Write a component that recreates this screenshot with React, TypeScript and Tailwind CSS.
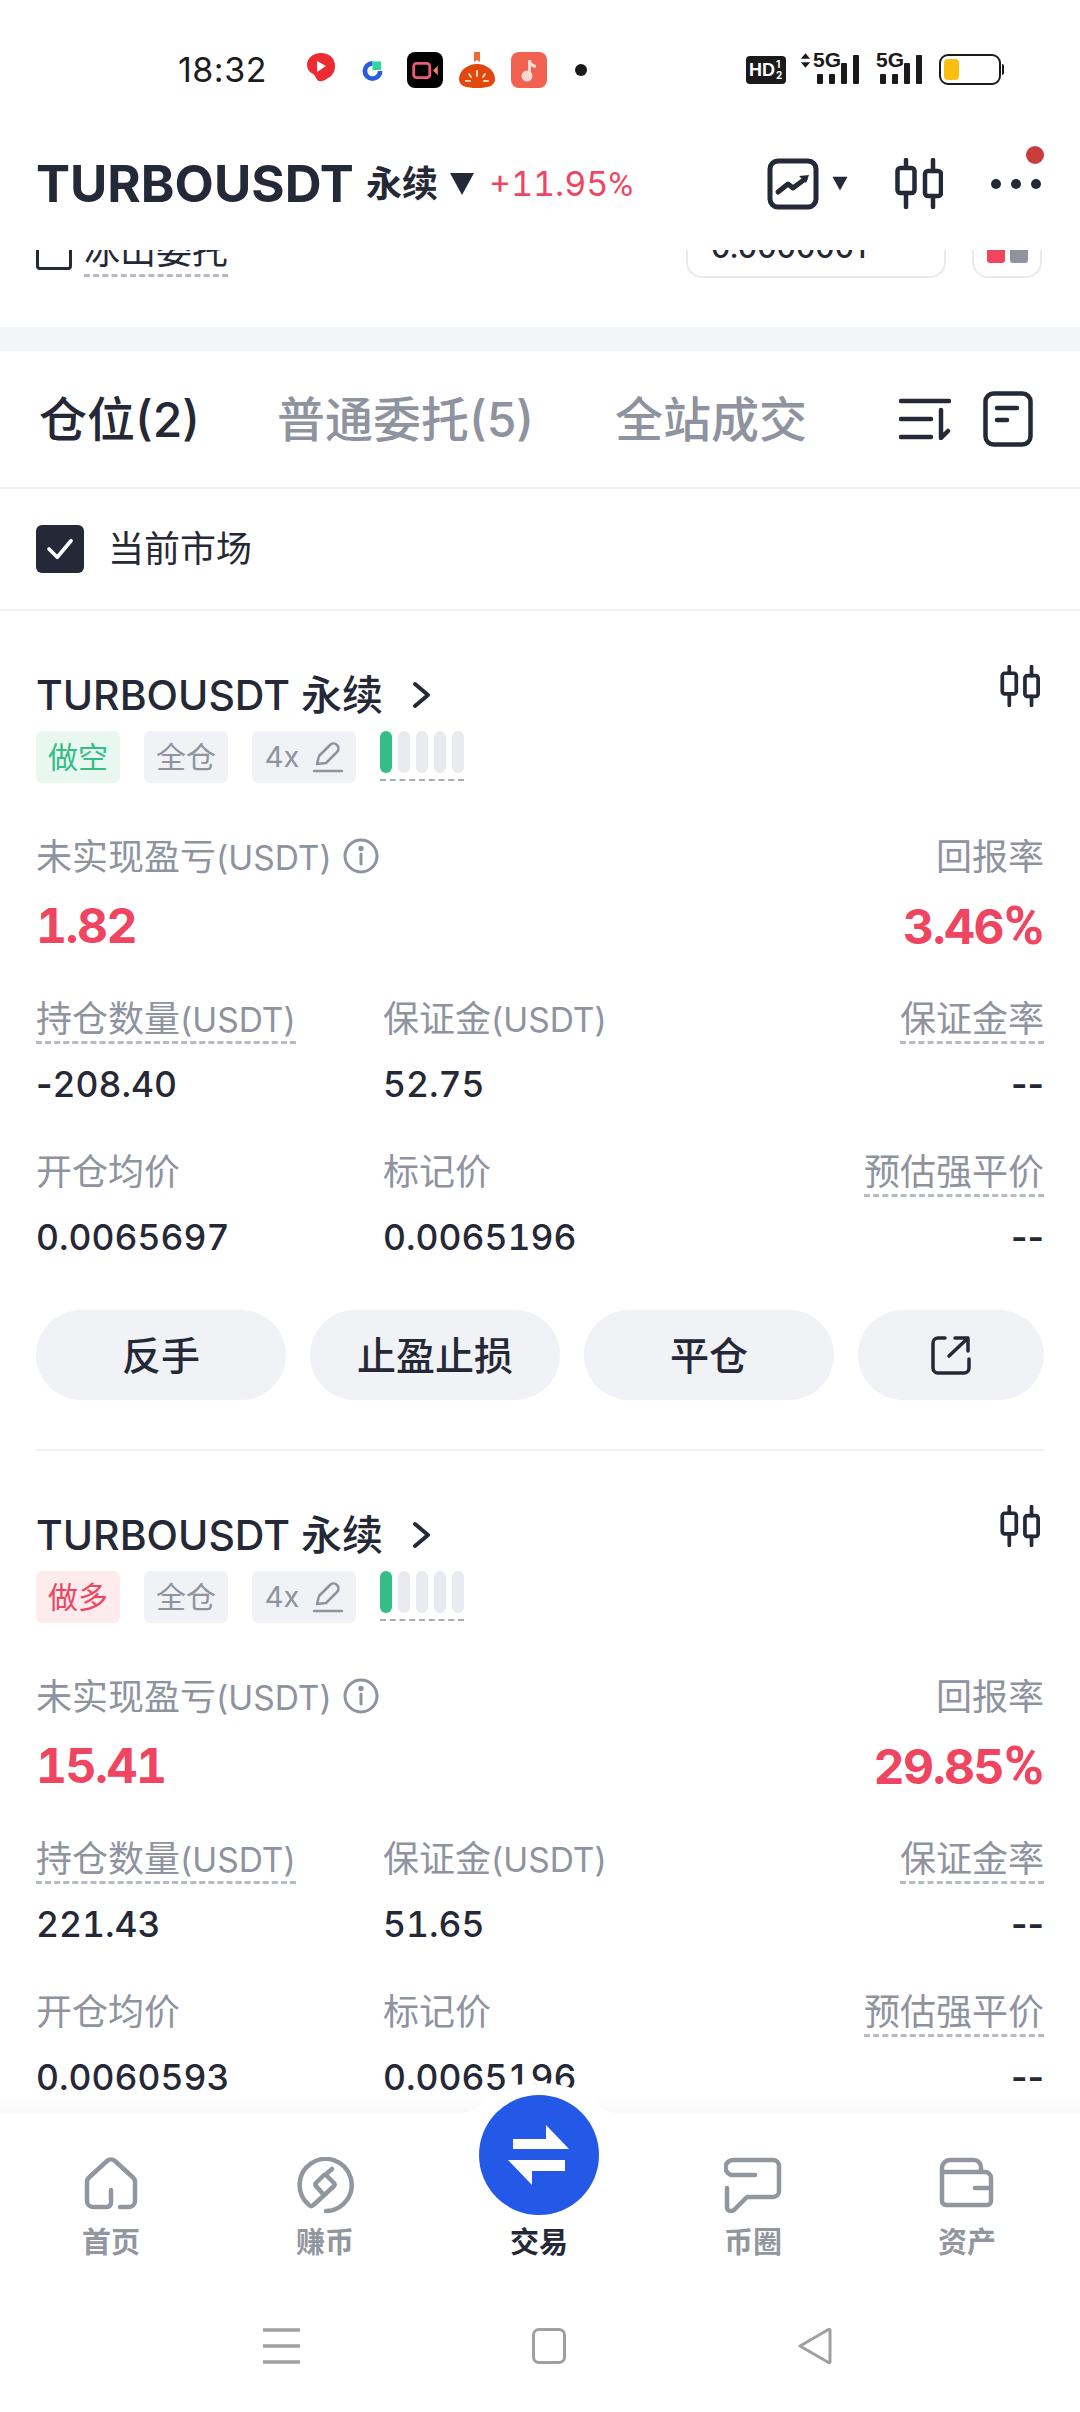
import React from 'react';

type Position = {
  side: string;
  sideClass: string;
  pnl: string;
  roe: string;
  size: string;
  margin: string;
  entry: string;
  mark: string;
};

const POSITIONS: Position[] = [
  { side: '做空', sideClass: 'bg-[#e8f8f1] text-[#35bd85]', pnl: '1.82', roe: '3.46', size: '-208.40', margin: '52.75', entry: '0.0065697', mark: '0.0065196' },
  { side: '做多', sideClass: 'bg-[#fdebee] text-[#ef4560]', pnl: '15.41', roe: '29.85', size: '221.43', margin: '51.65', entry: '0.0060593', mark: '0.0065196' },
];

// --- ICONS ---

function CandleIcon({ className }: { className: string }) {
  return (
    <svg viewBox="0 0 48 51" fill="none" stroke="#252836" strokeWidth="4.5" strokeLinecap="round" className={className}>
      <rect x="2.5" y="10" width="17" height="25" rx="3" />
      <rect x="30" y="13" width="16" height="25" rx="3" />
      <path d="M11 2v8M11 35v14M38 2v11M38 38v11" />
    </svg>
  );
}

function Triangle({ className }: { className: string }) {
  return (
    <svg viewBox="0 0 26 24" fill="#252836" className={className}>
      <path d="M1 1h24L13 23z" />
    </svg>
  );
}

function Percent({ className }: { className?: string }) {
  return <span className={`[font-family:Roboto,sans-serif] ${className ?? ''}`}>%</span>;
}

function Signal({ arrows }: { arrows?: boolean }) {
  return (
    <div className="relative h-[30px] w-[42px]">
      <span className="absolute left-[-4px] top-[-4px] text-[21px] leading-[20px] font-bold text-[#1a1a1a] [font-family:'Liberation_Sans_Narrow','Liberation_Sans',sans-serif]">5G</span>
      <div className="absolute bottom-0 left-0 flex items-end gap-[6px]">
        <span className="h-[10px] w-[6px] rounded-[1px] bg-[#1a1a1a]" />
        <span className="h-[10px] w-[6px] rounded-[1px] bg-[#1a1a1a]" />
        <span className="h-[21px] w-[6px] rounded-[1px] bg-[#1a1a1a]" />
        <span className="h-[29px] w-[6px] rounded-[1px] bg-[#1a1a1a]" />
      </div>
      {arrows && (
        <svg viewBox="0 0 12 16" fill="#1a1a1a" className="absolute left-[-17px] top-[-1px] h-[15px] w-[11px]">
          <path d="M6 0l5 6H1zM6 16l5-6H1z" />
        </svg>
      )}
    </div>
  );
}

function StatusBar() {
  return (
    <div className="flex h-[110px] shrink-0 items-start pt-[52px]">
      <div className="ml-[178px] h-[36px] w-[90px] text-[34px] leading-[36px] tracking-[0.5px] text-[#1c1c1c]">18:32</div>

      <svg viewBox="0 0 28 30" className="ml-[39px] h-[30px] w-[28px]">
        <path d="M14 1c8 0 14 5 14 13 0 6-3 10-7 12-3 2-6 4-9 3-3-1-3-5-6-7C2 20 0 17 0 13 0 6 6 1 14 1z" fill="#ee2a35" />
        <path d="M10 9l9 5-9 6z" fill="#fff" />
      </svg>
      <svg viewBox="0 0 22 22" fill="none" className="ml-[27px] mt-[8px] h-[22px] w-[21px]">
        <path d="M11 3a8 8 0 1 0 8 8" stroke="#2b5be0" strokeWidth="5" />
        <rect x="11" y="1" width="9" height="9" fill="#2fd6a0" />
      </svg>
      <div className="ml-[24px] flex h-[36px] w-[36px] items-center justify-center rounded-[8px] bg-black">
        <svg viewBox="0 0 28 18" fill="none" className="h-[17px] w-[27px]">
          <rect x="1.5" y="1.5" width="17" height="15" rx="3" stroke="#ec5a76" strokeWidth="3" />
          <path d="M22 9l5-5v10z" fill="#f08a63" />
        </svg>
      </div>
      <svg viewBox="0 0 36 36" className="ml-[16px] h-[36px] w-[36px]">
        <path d="M15 0h6v10l-3-2-3 2z" fill="#ee6a3a" />
        <path d="M18 12c10 0 18 7 18 15 0 7-7 9-18 9S0 34 0 27c0-8 8-15 18-15z" fill="#e2470e" />
        <path d="M18 19v5M10 22l2 3M26 22l-2 3M7 29h4M25 29h4" stroke="#ffd9b8" strokeWidth="2" strokeLinecap="round" />
      </svg>
      <div className="ml-[16px] flex h-[36px] w-[36px] items-center justify-center rounded-[8px] bg-[#f0614f]">
        <svg viewBox="0 0 18 24" className="h-[24px] w-[18px]">
          <path d="M8 2h3c0 3 2 4 5 5v3c-2 0-4-1-5-2v11H8z" fill="#fbd9d3" />
          <circle cx="7" cy="18" r="5.500" fill="#fbd9d3" />
        </svg>
      </div>
      <span className="ml-[28px] mt-[12px] h-[12px] w-[12px] rounded-full bg-[#1a1a1a]" />

      <div className="ml-[159px] mt-[4px] flex h-[28px] w-[40px] items-center rounded-[4px] bg-[#1a1a1a] pl-[3px] text-white">
        <span className="text-[18px] leading-none font-bold [font-family:'Liberation_Sans_Narrow','Liberation_Sans',sans-serif]">HD</span>
        <div className="ml-[1px] flex flex-col text-[10px] leading-[11px] font-bold">
          <span>1</span>
          <span>2</span>
        </div>
      </div>
      <div className="ml-[31px] mt-[2px]">
        <Signal arrows />
      </div>
      <div className="ml-[21px] mt-[2px]">
        <Signal />
      </div>
      <div className="ml-[17px] mt-[2px] flex items-center">
        <div className="h-[31px] w-[62px] rounded-[9px] border-2 border-[#1a1a1a] p-[3px]">
          <div className="h-full w-[15px] rounded-[4px] bg-[#fdbf0f]" />
        </div>
        <span className="ml-[1px] h-[11px] w-[2px] rounded-r bg-[#1a1a1a]" />
      </div>
    </div>
  );
}

function Header() {
  return (
    <div className="relative flex h-[140px] shrink-0 items-center pl-[36px] pt-[7px]">
      <span className="text-[51px] leading-none font-bold text-[#252836]">TURBOUSDT</span>
      <span className="ml-[12px] text-[36px] font-bold text-[#252836]">永续</span>
      <Triangle className="ml-[11px] h-[24px] w-[26px]" />
      <div className="ml-[14px] w-[149px] text-[34px] tabular-nums text-[#ef4560]">+11.95<Percent /></div>

      <svg viewBox="0 0 52 52" fill="none" stroke="#252836" strokeWidth="5" className="ml-[129px] h-[52px] w-[52px]">
        <rect x="3" y="3" width="46" height="46" rx="8" />
        <path d="M11 34l10-8 5 4 12-9" strokeLinecap="round" strokeLinejoin="round" />
        <path d="M32 18l10-1-3 8z" fill="#252836" stroke="none" />
      </svg>
      <Triangle className="ml-[12px] h-[15px] w-[18px]" />
      <CandleIcon className="ml-[46px] h-[51px] w-[48px]" />
      <div className="ml-[48px] flex gap-[10px]">
        <span className="h-[10px] w-[10px] rounded-full bg-[#252836]" />
        <span className="h-[10px] w-[10px] rounded-full bg-[#252836]" />
        <span className="h-[10px] w-[10px] rounded-full bg-[#252836]" />
      </div>
      <span className="absolute left-[1026px] top-[36px] h-[18px] w-[18px] rounded-full bg-[#c93c3c]" />
    </div>
  );
}

// what is left of the order form, scrolled away under the header
function OrderFormTail() {
  return (
    <div className="flex h-[77px] shrink-0 items-start overflow-hidden pl-[36px]">
      <span className="-mt-[16px] h-[36px] w-[36px] rounded-[4px] border-[3px] border-[#252836]" />
      <span className="-mt-[22px] ml-[12px] border-b-[3px] border-dashed border-[#b6bac4] text-[36px] leading-[46px] text-[#252836]">冰山委托</span>
      <div className="-mt-[52px] ml-[458px] flex h-[80px] w-[260px] items-end rounded-b-[16px] border-2 border-[#e9eaef] pb-[14px] pl-[23px] text-[30px] leading-[30px] font-medium text-[#252836]">0.0000001</div>
      <div className="-mt-[52px] ml-[26px] flex h-[80px] w-[70px] items-end justify-center gap-[5px] rounded-b-[16px] border-2 border-[#e9eaef] pb-[13px]">
        <span className="h-[30px] w-[18px] rounded-[3px] bg-[#ef4560]" />
        <span className="h-[30px] w-[18px] rounded-[3px] bg-[#8e939f]" />
      </div>
    </div>
  );
}

function Tabs() {
  return (
    <div className="flex h-[138px] shrink-0 items-center border-b-2 border-[#f0f1f3] pl-[39px] text-[48px] font-medium">
      <span className="w-[238px] pt-[2px] text-[#252836]">仓位(2)</span>
      <span className="w-[338px] pt-[2px] text-[#8e939f]">普通委托(5)</span>
      <span className="w-[284px] pt-[2px] text-[#8e939f]">全站成交</span>
      <svg viewBox="0 0 52 42" fill="none" stroke="#252836" strokeWidth="4.5" strokeLinecap="round" strokeLinejoin="round" className="h-[42px] w-[52px]">
        <path d="M2 3h48M2 21h30M2 39h30M42 12v28l7-7" />
      </svg>
      <svg viewBox="0 0 50 56" fill="none" stroke="#252836" strokeWidth="4.5" strokeLinecap="round" className="ml-[32px] h-[56px] w-[50px]">
        <rect x="2.5" y="2.5" width="45" height="51" rx="8" />
        <path d="M14 17h20M14 29h10" />
      </svg>
    </div>
  );
}

function MarketFilter() {
  return (
    <div className="flex h-[122px] shrink-0 items-center border-b-2 border-[#f0f1f3] pl-[36px]">
      <div className="flex h-[48px] w-[48px] items-center justify-center rounded-[6px] bg-[#252836]">
        <svg viewBox="0 0 30 24" fill="none" stroke="#fff" strokeWidth="4" strokeLinecap="round" strokeLinejoin="round" className="h-[22px] w-[28px]">
          <path d="M3 12l9 9L27 3" />
        </svg>
      </div>
      <span className="ml-[24px] text-[36px] text-[#252836]">当前市场</span>
    </div>
  );
}

// --- POSITION CARD ---

function Usdt() {
  return <span className="text-[33.5px]">(USDT)</span>;
}

function Dashed({ children }: { children: React.ReactNode }) {
  return <span className="inline-block h-[46px] border-b-[3px] border-dashed border-[#b6bac4] leading-[42px]">{children}</span>;
}

// tabular digits space a hyphen out too, so the leading dashes stay proportional
function Num({ value }: { value: string }) {
  const dashes = value.match(/^-+/)?.[0] ?? '';
  return (
    <>
      <span className="font-semibold normal-nums">{dashes}</span>
      <span className="tabular-nums">{value.slice(dashes.length)}</span>
    </>
  );
}

function Cell({ label, value, dashed, right }: { label: React.ReactNode; value: string; dashed?: boolean; right?: boolean }) {
  return (
    <div className={right ? 'text-right' : ''}>
      <div className="h-[44px] text-[36px] text-[#8e939f] leading-[44px]">{dashed ? <Dashed>{label}</Dashed> : label}</div>
      <div className="mt-[22px] h-[44px] text-[35.5px] leading-[44px] font-medium text-[#252836]"><Num value={value} /></div>
    </div>
  );
}

function PositionCard({ p, last }: { p: Position; last?: boolean }) {
  return (
    <div className="px-[36px] pt-[60px]">
      <div className="flex h-[48px] justify-between">
        <div className="flex items-center text-[#252836]">
          <span className="text-[41px] leading-[48px] font-medium">TURBOUSDT 永续</span>
          <svg viewBox="0 0 20 28" fill="none" stroke="#252836" strokeWidth="4" strokeLinecap="round" strokeLinejoin="round" className="ml-[29px] h-[28px] w-[20px]">
            <path d="M3 3l13 11L3 25" />
          </svg>
        </div>
        <CandleIcon className="mr-[4px] -mt-[6px] h-[42px] w-[40px]" />
      </div>

      <div className="mt-[12px] flex h-[52px] items-start text-[30px]">
        <span className={`flex h-[52px] w-[84px] items-center justify-center rounded-[6px] ${p.sideClass}`}>{p.side}</span>
        <span className="ml-[24px] flex h-[52px] w-[84px] items-center justify-center rounded-[6px] bg-[#f1f2f6] text-[#8e939f]">全仓</span>
        <span className="ml-[24px] flex h-[52px] w-[104px] items-center justify-center gap-[14px] rounded-[6px] bg-[#f1f2f6] text-[29px] text-[#8e939f]">
          4x
          <svg viewBox="0 0 30 32" fill="none" stroke="#8e939f" strokeWidth="2.5" strokeLinecap="round" strokeLinejoin="round" className="h-[32px] w-[30px]">
            <path d="M4 23l2-8L17 4c2-2 5-2 7 0s2 5 0 7L13 22zM1 30h28" />
          </svg>
        </span>
        <div className="ml-[24px] w-[84px] border-b-2 border-dashed border-[#a9adb8] pb-[6px]">
          <div className="flex gap-[6px]">
            <span className="h-[42px] w-[12px] rounded-full bg-[#35bd85]" />
            <span className="h-[42px] w-[12px] rounded-full bg-[#e9eaef]" />
            <span className="h-[42px] w-[12px] rounded-full bg-[#e9eaef]" />
            <span className="h-[42px] w-[12px] rounded-full bg-[#e9eaef]" />
            <span className="h-[42px] w-[12px] rounded-full bg-[#e9eaef]" />
          </div>
        </div>
      </div>

      <div className="mt-[52px] flex h-[44px] items-center justify-between text-[36px] text-[#8e939f]">
        <div className="flex items-center gap-[11px]">
          <span>未实现盈亏<Usdt /></span>
          <svg viewBox="0 0 36 36" fill="none" stroke="#8e939f" strokeWidth="3" strokeLinecap="round" className="-mt-[2px] h-[36px] w-[36px]">
            <circle cx="18" cy="18" r="16" />
            <path d="M18 16v10" />
            <circle cx="18" cy="10.5" r="1.2" fill="#8e939f" />
          </svg>
        </div>
        <span>回报率</span>
      </div>
      <div className="mt-[19px] flex h-[56px] items-center justify-between text-[48px] leading-[56px] font-bold tracking-[-1.5px] tabular-nums text-[#ef4560]">
        <span>{p.pnl}</span>
        <span>{p.roe}<Percent className="ml-[1px] text-[54px] leading-[56px] tracking-normal" /></span>
      </div>

      <div className="mt-[43px] grid grid-cols-[347px_1fr_1fr] gap-y-[43px]">
        <Cell label={<>持仓数量<Usdt /></>} value={p.size} dashed />
        <Cell label={<>保证金<Usdt /></>} value={p.margin} />
        <Cell label="保证金率" value="--" dashed right />
        <Cell label="开仓均价" value={p.entry} />
        <Cell label="标记价" value={p.mark} />
        <Cell label="预估强平价" value="--" dashed right />
      </div>

      {!last && (
        <>
          <div className="mt-[50px] flex gap-[24px] text-[39px] font-medium text-[#252836]">
            <button className="h-[90px] w-[250px] rounded-full bg-[#f1f2f6] pt-[3px]">反手</button>
            <button className="h-[90px] w-[250px] rounded-full bg-[#f1f2f6] pt-[3px]">止盈止损</button>
            <button className="h-[90px] w-[250px] rounded-full bg-[#f1f2f6] pt-[3px]">平仓</button>
            <button className="flex h-[90px] w-[186px] items-center justify-center rounded-full bg-[#f1f2f6]">
              <svg viewBox="0 0 40 40" fill="none" stroke="#252836" strokeWidth="3.5" strokeLinecap="round" strokeLinejoin="round" className="h-[40px] w-[40px]">
                <path d="M14 3H7a5 5 0 0 0-5 5v25a5 5 0 0 0 5 5h26a5 5 0 0 0 5-5v-9M18 21L37 3M24 3h13v13" />
              </svg>
            </button>
          </div>
          <div className="mt-[49px] h-[2px] bg-[#f0f1f3]" />
        </>
      )}
    </div>
  );
}

// --- BOTTOM NAV ---

const NAV_ITEMS = [
  { label: '首页', box: '0 0 52 56', path: 'M26 33v13a4 4 0 0 1-4 4H8a6 6 0 0 1-6-6V25a6 6 0 0 1 2-4.5L22 4a6 6 0 0 1 8 0l18 16.5a6 6 0 0 1 2 4.5V44a6 6 0 0 1-6 6h-9' },
  { label: '赚币', box: '0 0 56 56', path: 'M29 54a26 26 0 1 0-17-6c1.5 1.5 3 1.5 4.5 0L37 29a2 2 0 0 0 0-3l-8-8a1.5 1.5 0 0 0-2 0l-8 8a2 2 0 0 0 0 3l7 8M28 18l7-6' },
  { label: '交易', box: '', path: '' },
  { label: '币圈', box: '0 0 58 56', path: 'M31 18H9a7 7 0 0 1 0-15h40a6 6 0 0 1 6 6v25a6 6 0 0 1-6 6H24a3 3 0 0 0-2 1l-12 12c-3 2-7 1-7-3V31' },
  { label: '资产', box: '0 0 54 56', path: 'M2 16v28a4 4 0 0 0 4 4h41a4 4 0 0 0 4-4V21a6 6 0 0 0-6-6H2v-4a8 8 0 0 1 8-8h24a7 7 0 0 1 7 7v5M35 31h16' },
];

function BottomNav() {
  return (
    <div className="relative h-[299px] shrink-0 bg-white">
      <div className="absolute inset-x-0 top-[-18px] h-[18px] bg-gradient-to-b from-[#ffffff00] to-[#f9f9fb]" />
      <svg viewBox="0 0 220 34" className="absolute left-[429px] top-[-32px] h-[34px] w-[220px]">
        <path d="M0 34c30 0 44 0 58-16C72 6 90 2 110 2s38 4 52 16c14 16 28 16 58 16z" fill="#fff" />
      </svg>

      <div className="grid grid-cols-5 pl-[4px] pr-[6px] pt-[44px]">
        {NAV_ITEMS.map((item) => (
          <div key={item.label} className="relative flex flex-col items-center">
            {item.path ? (
              <svg viewBox={item.box} fill="none" stroke="#92969f" strokeWidth="4.5" strokeLinecap="round" strokeLinejoin="round" className="h-[56px] w-[58px]">
                <path d={item.path} />
              </svg>
            ) : (
              <>
                <div className="absolute top-[-62px] flex h-[120px] w-[120px] items-center justify-center rounded-full bg-[#2458e6]">
                  <svg viewBox="0 0 120 120" fill="#fff" className="h-[120px] w-[120px]">
                    <path d="M34 44h33V30l23 24H34zM86 65H29l24 25V76h33z" />
                  </svg>
                </div>
                <div className="h-[56px]" />
              </>
            )}
            <span className={`mt-[10px] h-[40px] text-[29px] leading-[40px] font-bold ${item.path ? 'text-[#92969f]' : 'text-[#252836]'}`}>{item.label}</span>
          </div>
        ))}
      </div>

      <div className="mt-[65px] flex items-start pl-[263px]">
        <svg viewBox="0 0 37 36" fill="none" stroke="#a0a0a0" strokeWidth="3.5" className="h-[36px] w-[37px]">
          <path d="M0 2h37M0 18h37M0 34h37" />
        </svg>
        <div className="ml-[232px] h-[36px] w-[34px] rounded-[7px] border-[3px] border-[#a0a0a0]" />
        <svg viewBox="0 0 34 36" fill="none" stroke="#a0a0a0" strokeWidth="3" strokeLinejoin="round" className="ml-[232px] h-[36px] w-[34px]">
          <path d="M32 2v32a1 1 0 0 1-1.500.5L2 18 30.500 1.500A1 1 0 0 1 32 2z" />
        </svg>
      </div>
    </div>
  );
}

export default function App() {
  return (
    <div className="flex h-[2412px] w-[1080px] flex-col overflow-hidden bg-white [font-family:Inter,'Noto_Sans_CJK_SC',sans-serif]">
      <StatusBar />
      <Header />
      <OrderFormTail />
      <div className="h-[24px] shrink-0 bg-[#f4f5f7]" />
      <Tabs />
      <MarketFilter />
      <div className="min-h-0 flex-1 overflow-hidden">
        {POSITIONS.map((p, i) => (
          <PositionCard key={i} p={p} last={i === POSITIONS.length - 1} />
        ))}
      </div>
      <BottomNav />
    </div>
  );
}
